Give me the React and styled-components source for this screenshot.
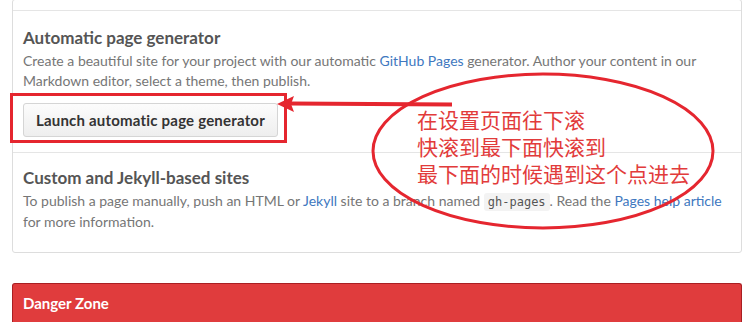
import React from "react";
import styled, { createGlobalStyle } from "styled-components";

const GlobalStyle = createGlobalStyle`
  html, body {
    margin: 0;
    padding: 0;
    background: #fff;
  }
  body {
    font-family: Lato, "Liberation Sans", sans-serif;
    font-size: 14px;
    color: #767676;
    overflow: hidden;
  }
`;

const Page = styled.div`
  position: relative;
  width: 745px;
  height: 326px;
  padding: 0 3px 0 12px;
  box-sizing: border-box;
`;

const Box = styled.div`
  margin-top: -1px;
  border: 1px solid #ddd;
  border-radius: 3px;
`;

const PrevSection = styled.div`
  height: 10px;
`;

const Section = styled.section`
  border-top: 1px solid #e5e5e5;
  padding: ${(p) => p.$pad || "15px 10px"};
`;

const Heading = styled.h3`
  margin: 0;
  font-size: 17px;
  line-height: 22px;
  font-weight: 700;
  color: #555;
`;

const Text = styled.p`
  margin: ${(p) => p.$margin || "2px 0 0"};
  line-height: 20px;
  color: #767676;
`;

const Link = styled.a`
  color: #4078c0;
  text-decoration: none;
`;

const Code = styled.code`
  font-family: "DejaVu Sans Mono", "Liberation Mono", monospace;
  font-size: 12px;
  padding: 2px 4px;
  background: #f3f3f3;
  border-radius: 3px;
  color: #555;
`;

const Button = styled.button`
  display: inline-block;
  margin-top: 12px;
  height: 34px;
  padding: 0 12px;
  font-family: inherit;
  font-size: 15px;
  font-weight: 700;
  letter-spacing: 0.2px;
  color: #333;
  background: linear-gradient(#fcfcfc, #eee);
  border: 1px solid #d5d5d5;
  border-radius: 3px;
`;

const Danger = styled.div`
  margin-top: 30px;
  border: 1px solid #a91f22;
  border-bottom: none;
  border-radius: 3px 3px 0 0;
  background: #e03c3d;
  height: 38px;
  display: flex;
  align-items: center;
  padding: 0 10px;
  color: #fff;
  font-weight: 700;
  font-size: 15px;
`;

const Overlay = styled.svg`
  position: absolute;
  left: 0;
  top: 0;
  pointer-events: none;
`;

const Note = styled.div`
  position: absolute;
  left: 417px;
  top: 107px;
  font-family: "Noto Sans CJK SC", sans-serif;
  font-size: 21px;
  line-height: 27px;
  color: #e23b3b;
  white-space: nowrap;
`;

export default function App() {
  return (
    <>
      <GlobalStyle />
      <Page>
        <Box>
          <PrevSection />
          <Section $pad="16px 10px 15px">
            <Heading>Automatic page generator</Heading>
            <Text>
              Create a beautiful site for your project with our automatic{" "}
              <Link href="#">GitHub Pages</Link> generator. Author your content in our
              Markdown editor, select a theme, then publish.
            </Text>
            <Button>Launch automatic page generator</Button>
          </Section>
          <Section $pad="14px 10px 20px">
            <Heading>Custom and Jekyll-based sites</Heading>
            <Text>
              To publish a page manually, push an HTML or <Link href="#">Jekyll</Link> site to a
              branch named <Code>gh-pages</Code>. Read the <Link href="#">Pages help article</Link>{" "}
              for more information.
            </Text>
          </Section>
        </Box>
        <Danger>Danger Zone</Danger>

        <Overlay width="745" height="326" viewBox="0 0 745 326">
          <rect x="11.5" y="95.5" width="274" height="47" fill="none" stroke="#e5262f" strokeWidth="3" />
          <ellipse cx="543" cy="152" rx="170" ry="77" fill="none" stroke="#e5262f" strokeWidth="3" />
          <path d="M290 104.5 L452 105.5" stroke="#e5262f" strokeWidth="4" fill="none" />
          <polygon points="277,105 294,97 291,105 294,113" fill="#e5262f" />
        </Overlay>
        <Note>
          在设置页面往下滚
          <br />
          快滚到最下面快滚到
          <br />
          最下面的时候遇到这个点进去
        </Note>
      </Page>
    </>
  );
}
